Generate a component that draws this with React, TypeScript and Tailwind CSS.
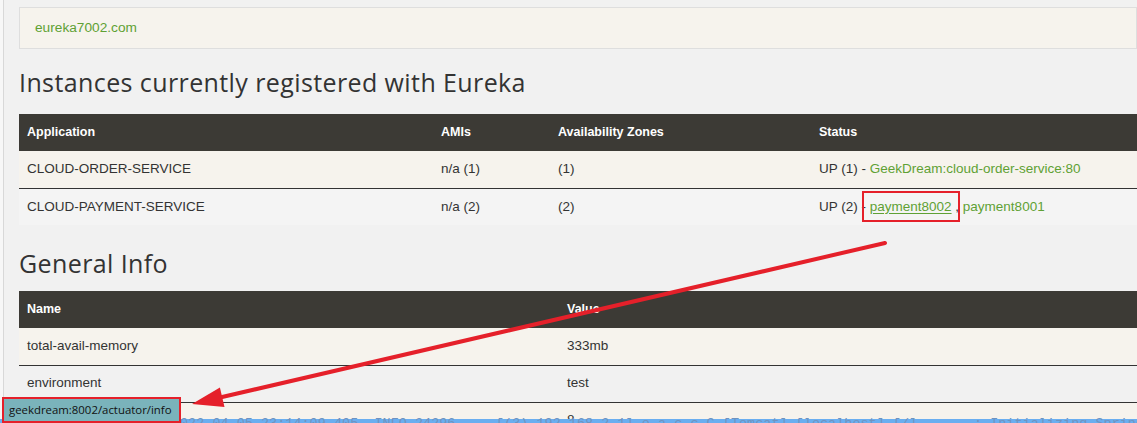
import React from "react";

const instances = [
  {
    app: "CLOUD-ORDER-SERVICE",
    amis: "n/a (1)",
    zones: "(1)",
    up: "UP (1) - ",
    links: ["GeekDream:cloud-order-service:80"],
  },
  {
    app: "CLOUD-PAYMENT-SERVICE",
    amis: "n/a (2)",
    zones: "(2)",
    up: "UP (2) - ",
    links: ["payment8002", "payment8001"],
  },
];

const info = [
  ["total-avail-memory", "333mb"],
  ["environment", "test"],
  ["num-of-cpus", "8"],
];

function StatusCell({ up, links }: { up: string; links: string[] }) {
  return (
    <span>
      {up}
      {links.map((l, i) => (
        <React.Fragment key={l}>
          {i > 0 && <span className="text-[#333]"> , </span>}
          <span
            className={`text-[#5fa134] ${
              l === "payment8002"
                ? "underline underline-offset-2 outline-2 outline-[#e5202a] outline-offset-[6px]"
                : ""
            }`}
          >
            {l}
          </span>
        </React.Fragment>
      ))}
    </span>
  );
}

export default function App() {
  return (
    <div className="relative w-[1137px] h-[423px] overflow-hidden bg-[#f1f1f1] font-['Liberation_Sans',Arial,sans-serif] text-[13.5px] text-[#333]">
      <div className="flex h-full">
        <div className="w-[4px] shrink-0 bg-[#f7f7f7] border-r border-[#d8d8d8]" />
        <div className="flex-1 pl-[15px] min-w-0">
          <div className="mt-[7px] h-[42px] border border-[#dedede] bg-[#f6f3ed] px-[15px] flex items-center">
            <span className="text-[#5fa134] text-[13.7px]">eureka7002.com</span>
          </div>

          <h2 className="mt-[19px] h-[29px] text-[25px] leading-[29px] text-[#333] font-['Open_Sans',sans-serif] tracking-[0.4px]">
            Instances currently registered with Eureka
          </h2>

          <table className="mt-[17px] w-full border-collapse">
            <thead>
              <tr className="bg-[#3c3a35] text-white h-[37px] text-[12.5px]">
                <th className="w-[422px] text-left font-bold pl-[8px]">Application</th>
                <th className="w-[117px] text-left font-bold">AMIs</th>
                <th className="w-[261px] text-left font-bold">Availability Zones</th>
                <th className="text-left font-bold">Status</th>
              </tr>
            </thead>
            <tbody>
              {instances.map((r, i) => (
                <tr
                  key={r.app}
                  className={`h-[37px] ${i % 2 === 0 ? "bg-[#f6f3ed] border-b border-[#333]" : "bg-[#f4f4f4]"}`}
                >
                  <td className="pl-[8px]">{r.app}</td>
                  <td>{r.amis}</td>
                  <td>{r.zones}</td>
                  <td>
                    <StatusCell up={r.up} links={r.links} />
                  </td>
                </tr>
              ))}
            </tbody>
          </table>

          <h2 className="mt-[24px] h-[29px] text-[25px] leading-[29px] text-[#333] font-['Open_Sans',sans-serif] tracking-[0.4px]">
            General Info
          </h2>

          <table className="mt-[13px] w-full border-collapse">
            <thead>
              <tr className="bg-[#3c3a35] text-white h-[37px] text-[12.5px]">
                <th className="w-[548px] text-left font-bold pl-[8px]">Name</th>
                <th className="text-left font-bold">Value</th>
              </tr>
            </thead>
            <tbody>
              {info.map(([k, v], i) => (
                <tr
                  key={k}
                  className={`h-[37px] border-b border-[#333] ${i % 2 === 0 ? "bg-[#f6f3ed]" : "bg-[#f1f1f1]"}`}
                >
                  <td className="pl-[8px]">{k}</td>
                  <td>{v}</td>
                </tr>
              ))}
            </tbody>
          </table>
        </div>
      </div>

      {/* console window behind, peeking at the bottom */}
      <div className="absolute left-0 right-0 top-[419px] h-[4px] bg-[#6aaef0]" />
      <div className="absolute left-0 right-0 top-[416px] h-[7px] overflow-hidden font-['Liberation_Mono',monospace] text-[13.5px] leading-[14px] text-[#6f93c0] whitespace-pre">
        <div className="pl-[180px] pt-[1px]">
          {"022-04-05 23:14:09.405  INFO 24296 --- [(3)-192.168.2.1] o.a.c.c.C.[Tomcat].[localhost].[/]       : Initializing Spring"}
        </div>
      </div>

      {/* browser status bubble */}
      <div className="absolute left-[2px] top-[397px] h-[26px] w-[179px] border-2 border-[#e5202a] bg-[#7ab3bb] flex items-center pl-[5px] font-['Open_Sans',sans-serif] text-[11.4px] text-[#111]">
        geekdream:8002/actuator/info
      </div>

      {/* annotation arrow */}
      <svg className="absolute inset-0 pointer-events-none" width="1137" height="423">
        <line x1="885" y1="243" x2="220" y2="397.5" stroke="#e5202a" strokeWidth="4" strokeLinecap="round" />
        <polygon points="192,404 224.5,407 219.9,387.5" fill="#e5202a" />
      </svg>
    </div>
  );
}
